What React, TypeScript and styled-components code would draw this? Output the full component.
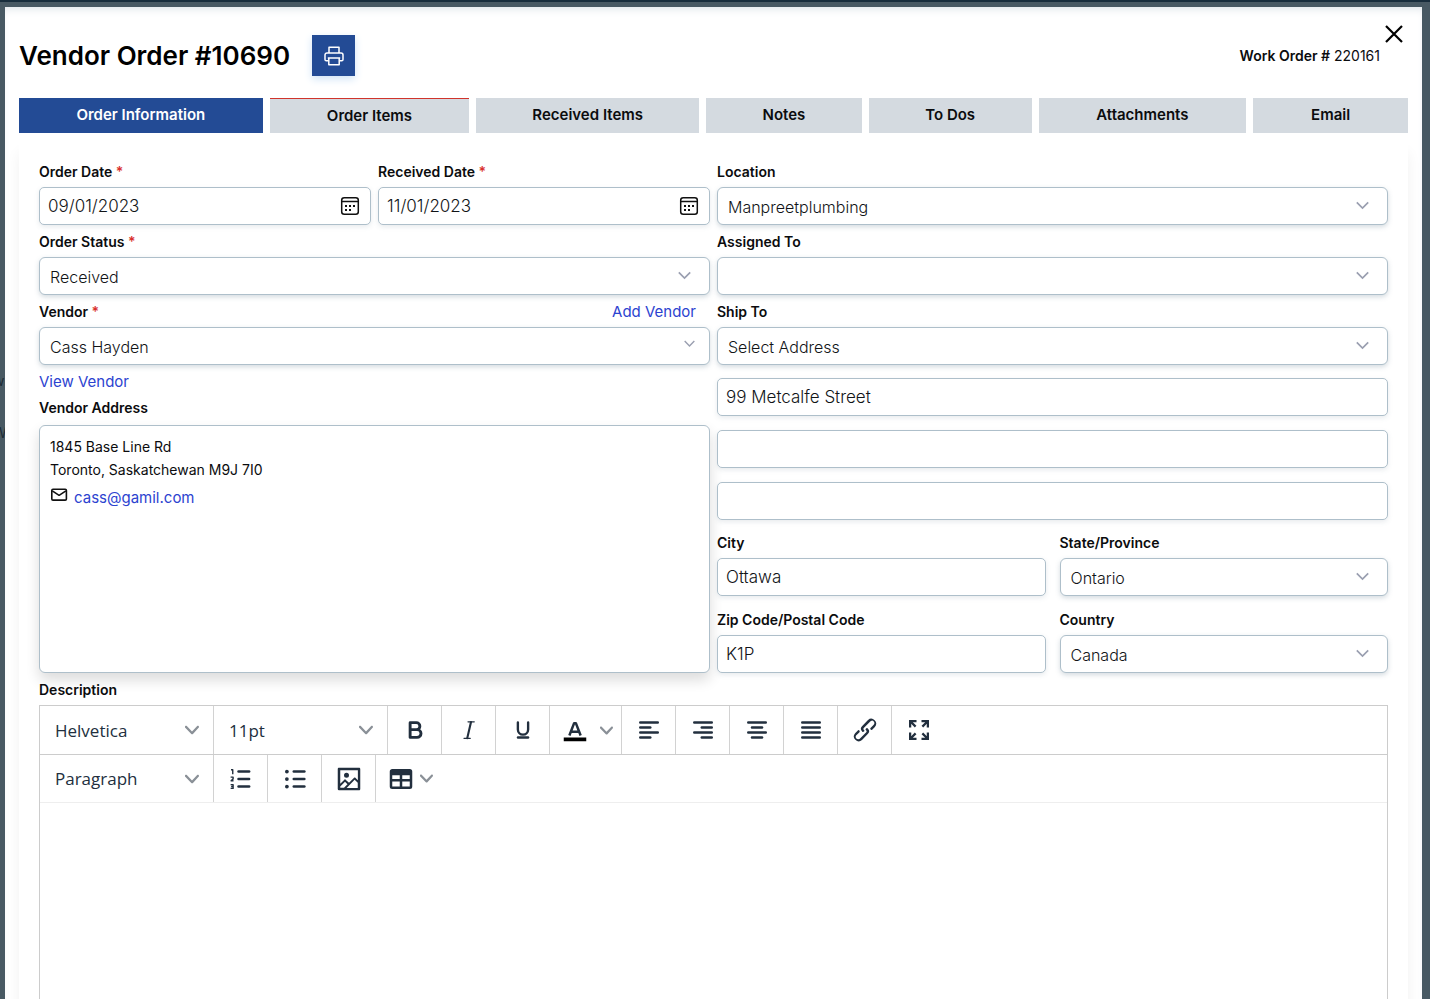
import React, { useId } from "react";
import styled, { createGlobalStyle } from "styled-components";

const SANS = `Inter, "Liberation Sans", sans-serif`;
const EDITOR_SANS = `"Open Sans", "Noto Sans", sans-serif`;

const GlobalStyle = createGlobalStyle`
  *, *::before, *::after { box-sizing: border-box; }
  html, body { margin: 0; padding: 0; }
  body { font-family: ${SANS}; font-size: 14px; color: #0b0c0e; background: #485963; overflow: hidden; }
  button, input, select { font-family: inherit; margin: 0; }
`;

/* ---------- page shell ---------- */

const Backdrop = styled.div`
  position: relative;
  height: 100vh;
  overflow: hidden;
  padding: 5px 8px 0 5px;
  background: #485963;
  border-top: 2px solid #182d3c;
`;

const Behind = styled.div`
  position: absolute;
  top: 353px;
  left: -7px;
  font-size: 14px;
  line-height: 52px;
  color: #1c2b35;
`;

const Modal = styled.main`
  position: relative;
  min-height: 100%;
  padding: 28px 14px 0;
  background: #fff;
  box-shadow: inset 0 6px 8px -4px #dfe5ea;
`;

const Header = styled.header`
  display: flex;
  align-items: center;
  gap: 22px;
`;

const Title = styled.h1`
  margin: 0;
  font-size: 26px;
  line-height: 40px;
  font-weight: 600;
  color: #000;
`;

const PrintButton = styled.button`
  display: grid;
  place-items: center;
  width: 43px;
  height: 41px;
  padding: 0;
  border: 0;
  color: #fff;
  background: #234b95;
  box-shadow: 0 3px 8px #cfe3f6;
`;

const WorkOrder = styled.p`
  margin: 0 28px 0 auto;
  font-size: 14px;
  line-height: 20px;
  b { font-weight: 600; }
`;

const CloseButton = styled.button`
  position: absolute;
  top: 17px;
  right: 18px;
  display: grid;
  place-items: center;
  width: 20px;
  height: 20px;
  padding: 0;
  border: 0;
  background: none;
  color: #000;
`;

const Tabs = styled.nav`
  display: flex;
  gap: 7px;
  margin-top: 22px;
`;

const Tab = styled.button<{ $share: number; $active?: boolean; $alert?: boolean }>`
  flex: ${(p) => p.$share} 1 0;
  min-width: 0;
  height: 35px;
  padding: 0 0 1px;
  border: 0;
  border-top: ${(p) => (p.$alert ? "1px solid #d0342c" : "0")};
  font-size: 15px;
  line-height: 20px;
  font-weight: 600;
  color: ${(p) => (p.$active ? "#fff" : "#0b0c0e")};
  background: ${(p) => (p.$active ? "#234b95" : "#d4dae0")};
`;

const Panel = styled.section`
  margin-top: 6px;
  padding: 23px 20px 20px;
  background: #fff;
  box-shadow: 0 14px 14px rgba(0, 0, 0, 0.06);
`;

/* ---------- form ---------- */

const Columns = styled.div`
  display: grid;
  grid-template-columns: 1fr 1fr;
  gap: 7px;
`;

const Column = styled.div`
  display: flex;
  flex-direction: column;
  gap: 7px;
  min-width: 0;
`;

const Pair = styled.div`
  display: grid;
  grid-template-columns: 1fr 1fr;
  gap: 7px;
`;

const AddressInputs = styled.div`
  display: flex;
  flex-direction: column;
  gap: 14px;
  margin-top: 6px;
`;

const AddressGrid = styled.div`
  display: grid;
  grid-template-columns: 1fr 1fr;
  gap: 14px;
  margin-top: 6px;
`;

const FieldBox = styled.div`
  display: flex;
  flex-direction: column;
  gap: 5px;
  min-width: 0;
`;

const LabelRow = styled.div`
  display: flex;
  justify-content: space-between;
  padding-right: 14px;
`;

const Label = styled.label`
  font-size: 14px;
  line-height: 20px;
  font-weight: 600;
`;

const Heading = styled.h2`
  margin: 0;
  font-size: 14px;
  line-height: 20px;
  font-weight: 600;
`;

const Required = styled.span`
  color: #d9302c;
`;

const Link = styled.a`
  align-self: flex-start;
  font-size: 15px;
  line-height: 19px;
  font-weight: 400;
  color: #2c43d0;
  text-decoration: none;
`;

const ControlWrap = styled.div`
  position: relative;
`;

const Input = styled.input`
  display: block;
  width: 100%;
  height: 38px;
  padding: 0 8px;
  border: 1px solid #aebfca;
  border-radius: 5px;
  outline: 0;
  font-size: 17px;
  font-weight: 300;
  line-height: 20px;
  color: #111417;
  background: #fff;
  box-shadow: 0 2px 5px rgba(90, 115, 135, 0.14);
`;

const Select = styled.select`
  appearance: none;
  display: block;
  width: 100%;
  height: 38px;
  padding: 1px 40px 0 10px;
  border: 1px solid #aebfca;
  border-radius: 6px;
  outline: 0;
  font-size: 16px;
  font-weight: 300;
  line-height: 20px;
  color: #111417;
  background: #fff;
  box-shadow: 0 2px 5px rgba(90, 115, 135, 0.26);
`;

const SelectArrow = styled.svg<{ $near?: boolean }>`
  position: absolute;
  top: ${(p) => (p.$near ? 13 : 14)}px;
  right: ${(p) => (p.$near ? 15 : 19)}px;
  width: ${(p) => (p.$near ? 11 : 13)}px;
  pointer-events: none;
`;

const DateButton = styled.button`
  position: absolute;
  top: 9px;
  right: 11px;
  display: block;
  width: 20px;
  height: 20px;
  padding: 0;
  border: 0;
  background: none;
`;

const AddressCard = styled.address`
  flex: 1;
  padding: 9px 10px;
  border: 1px solid #aebfca;
  border-radius: 6px;
  font-size: 14px;
  line-height: 23px;
  font-style: normal;
  font-weight: 400;
  background: #fff;
  box-shadow: 0 7px 14px rgba(0, 0, 0, 0.14);
`;

const MailRow = styled.div`
  display: flex;
  align-items: flex-start;
  gap: 6px;
  margin-top: 7px;
`;

/* ---------- editor ---------- */

const EditorBlock = styled.div`
  display: flex;
  flex-direction: column;
  gap: 5px;
  margin-top: 7px;
`;

const Editor = styled.div`
  border: 1px solid #ccc;
  background: #fff;
  color: #222f3e;
`;

const ToolRow = styled.div<{ $last?: boolean }>`
  display: flex;
  height: ${(p) => (p.$last ? 48 : 49)}px;
  border-bottom: 1px solid ${(p) => (p.$last ? "#eee" : "#ccc")};
`;

const ToolSelectWrap = styled.div`
  position: relative;
  width: 174px;
  border-right: 1px solid #d2d2d2;
`;

const ToolSelect = styled.select`
  appearance: none;
  width: 100%;
  height: 100%;
  padding: 0 40px 0 15px;
  border: 0;
  outline: 0;
  font-family: ${EDITOR_SANS};
  font-size: 17px;
  color: #222f3e;
  background: transparent;
`;

const ToolCaret = styled.svg`
  position: absolute;
  top: 17px;
  right: 14px;
  pointer-events: none;
`;

const Tool = styled.button<{ $open?: boolean }>`
  display: flex;
  align-items: center;
  justify-content: center;
  width: 54px;
  padding: 0;
  border: 0;
  border-right: ${(p) => (p.$open ? "0" : "1px solid #d2d2d2")};
  color: #222f3e;
  background: none;
`;

const SplitTool = styled(Tool)<{ $gap: number }>`
  justify-content: flex-start;
  gap: ${(p) => p.$gap}px;
  width: 72px;
  padding-left: 10px;
`;

const EditorBody = styled.div`
  height: 360px;
  padding: 16px;
  outline: 0;
  font-size: 15px;
`;

/* ---------- icons ---------- */

const CARET =
  "M8.7 2.2c.3-.3.8-.3 1 0 .4.4.4.9 0 1.2L5.7 7.8c-.3.3-.9.3-1.2 0L.2 3.4a.8.8 0 010-1.2c.3-.3.8-.3 1.1 0L5 6l3.7-3.8z";

function Caret() {
  return (
    <svg width="13" height="13" viewBox="0 0 10 10" aria-hidden="true">
      <path d={CARET} fill="#8a9097" />
    </svg>
  );
}

function Glyph({ children }: { children: React.ReactNode }) {
  return (
    <svg width="30" height="30" viewBox="0 0 24 24" fill="currentColor" aria-hidden="true">
      {children}
    </svg>
  );
}

function Bars({ rows }: { rows: [number, number][] }) {
  return (
    <Glyph>
      {rows.map(([x, w], i) => (
        <rect key={i} x={x} y={5 + i * 4} width={w} height="2" rx="1" />
      ))}
    </Glyph>
  );
}

const stroke = {
  fill: "none",
  stroke: "currentColor",
  strokeLinecap: "round" as const,
  strokeLinejoin: "round" as const,
};

const BoldIcon = (
  <Glyph>
    <path {...stroke} strokeWidth="2.3" d="M8.1 6.1h5a2.8 2.8 0 010 5.6h-5zM8.1 11.7h5.6a3.1 3.1 0 010 6.2H8.1z" />
  </Glyph>
);
const ItalicIcon = (
  <Glyph>
    <path {...stroke} strokeWidth="1.7" d="M13.6 5.6l-3 12.9" />
    <path {...stroke} strokeWidth="1" d="M11.2 5.4h5M8 18.6h5" />
  </Glyph>
);
const UnderlineIcon = (
  <Glyph>
    <path {...stroke} strokeWidth="1.9" d="M7.9 6v5.6a4.1 4.1 0 008.2 0V6" />
    <rect x="7" y="17" width="10" height="2" rx="1" />
  </Glyph>
);
const ColorIcon = (
  <Glyph>
    <rect x="3" y="18" width="18" height="3" fill="#000" />
    <path {...stroke} strokeLinecap="butt" strokeWidth="2" d="M7.500 16.400L11.300 6.500h1.400L16.500 16.400M9 13.300h6" />
  </Glyph>
);
const LinkIcon = (
  <Glyph>
    <path d="M6.2 12.3a1 1 0 011.4 1.4l-2.1 2a2 2 0 102.7 2.8l4.8-4.8a1 1 0 000-1.4 1 1 0 111.4-1.3 2.9 2.9 0 010 4L9.6 20a3.9 3.9 0 01-5.5-5.5l2-2zm11.6-.6a1 1 0 01-1.4-1.4l2-2a2 2 0 10-2.6-2.8L11 10.3a1 1 0 000 1.4A1 1 0 119.6 13a2.9 2.9 0 010-4L14.4 4a3.9 3.9 0 015.5 5.5l-2 2z" />
  </Glyph>
);
const FullscreenIcon = (
  <Glyph>
    {[0, 90, 180, 270].map((angle) => (
      <path
        key={angle}
        {...stroke}
        strokeLinecap="butt"
        strokeLinejoin="miter"
        strokeWidth="1.800"
        transform={`rotate(${angle} 12 12)`}
        d="M14 4.900h5.100V10M19 5l-4.300 4.300"
      />
    ))}
  </Glyph>
);
const BulletIcon = (
  <Glyph>
    {[6, 12, 18].map((y) => (
      <g key={y}>
        <circle cx="5.5" cy={y} r="1.5" />
        <rect x="10" y={y - 1} width="10.500" height="2" rx="1" />
      </g>
    ))}
  </Glyph>
);
const NumberIcon = (
  <Glyph>
    {[6, 12, 18].map((y) => (
      <rect key={y} x="9" y={y - 1} width="10.500" height="2" rx="1" />
    ))}
    <path {...stroke} strokeLinecap="butt" strokeWidth="1.100" d="M4 4.600h1.400v3.500M3.700 10.500h2v1.400l-1.600 1.500h1.900M3.700 16.500h2v3h-2M4.100 18h1.600" />
  </Glyph>
);
const ImageIcon = (
  <Glyph>
    <path
      fillRule="evenodd"
      d="M5 15.7l3.3-3.2c.3-.3.7-.3 1 0L12 15l4.100-4c.3-.4.8-.4 1 0l2 1.900V5H5v10.700zM5 18V19h3l2.800-2.900-2-2L5 17.900zm14-3l-2.500-2.400-6.400 6.500H19v-4zM4 3h16c.6 0 1 .4 1 1v16c0 .6-.4 1-1 1H4a1 1 0 01-1-1V4c0-.6.4-1 1-1zm6 8a2 2 0 100-4 2 2 0 000 4z"
    />
  </Glyph>
);
const TableIcon = (
  <Glyph>
    <path
      fillRule="evenodd"
      d="M19 4a2 2 0 012 2v12a2 2 0 01-2 2H5a2 2 0 01-2-2V6c0-1.100.9-2 2-2h14zM5 14v4h6v-4H5zm14 0h-6v4h6v-4zm0-5h-6v3h6V9zM5 12h6V9H5v3z"
    />
  </Glyph>
);

function PrinterIcon() {
  return (
    <svg width="20" height="20" viewBox="0 0 20 20" fill="none" stroke="currentColor" strokeWidth="1.500" strokeLinejoin="round" aria-hidden="true">
      <path d="M5 7V1.200h10V7" />
      <path d="M4.600 14.800H2.300c-.8 0-1.300-.5-1.300-1.300V9c0-1.100.8-2 2-2h14c1.200 0 2 .9 2 2v4.500c0 .8-.5 1.300-1.300 1.300h-2.300" />
      <path d="M3.800 12h12.400M4.800 12h10.400v6.800H4.800z" />
    </svg>
  );
}

const CALENDAR_DAYS = [
  [5, 9], [9, 9], [13, 9],
  [5, 13], [9, 13],
];

function CalendarIcon() {
  return (
    <svg width="20" height="20" viewBox="0 0 20 20" fill="none" stroke="#111" strokeWidth="1.500" aria-hidden="true">
      <rect x="1.700" y="1.700" width="16.600" height="16.600" rx="2.500" />
      <path d="M1.700 5.500h16.600" />
      {CALENDAR_DAYS.map(([x, y]) => (
        <rect key={`${x}-${y}`} x={x} y={y} width="2" height="2" fill="#111" stroke="none" />
      ))}
    </svg>
  );
}

function MailIcon() {
  return (
    <svg width="18" height="16" viewBox="0 0 18 16" fill="none" stroke="#111" strokeWidth="1.600" strokeLinejoin="round" aria-hidden="true">
      <rect x="1.800" y="1.300" width="14.600" height="10.800" rx="1.200" />
      <path d="M2.300 2.800L9.100 7.300l6.800-4.500" />
    </svg>
  );
}

/* ---------- field components ---------- */

type FieldProps = { label: string; required?: boolean; value: string };

function FieldLabel({ id, label, required }: { id: string; label: string; required?: boolean }) {
  return (
    <Label htmlFor={id}>
      {label}
      {required && <Required> *</Required>}
    </Label>
  );
}

function TextField({ label, value }: FieldProps) {
  const id = useId();
  return (
    <FieldBox>
      <FieldLabel id={id} label={label} />
      <Input id={id} defaultValue={value} />
    </FieldBox>
  );
}

function DateField({ label, required, value }: FieldProps) {
  const id = useId();
  return (
    <FieldBox>
      <FieldLabel id={id} label={label} required={required} />
      <ControlWrap>
        <Input id={id} defaultValue={value} />
        <DateButton type="button" aria-label={`Pick ${label}`}>
          <CalendarIcon />
        </DateButton>
      </ControlWrap>
    </FieldBox>
  );
}

function SelectField({ label, required, value, link, near }: FieldProps & { link?: string; near?: boolean }) {
  const id = useId();
  return (
    <FieldBox>
      <LabelRow>
        <FieldLabel id={id} label={label} required={required} />
        {link && <Link href="#add-vendor">{link}</Link>}
      </LabelRow>
      <ControlWrap>
        <Select id={id} defaultValue={value}>
          <option value={value}>{value}</option>
        </Select>
        <SelectArrow $near={near} viewBox="0 0 13 9" fill="none" stroke="#9a9fb0" strokeWidth="1.700" aria-hidden="true">
          <path d="M.8 1.300l5.700 5.700 5.700-5.700" />
        </SelectArrow>
      </ControlWrap>
    </FieldBox>
  );
}

function EditorSelect({ label, value }: { label: string; value: string }) {
  return (
    <ToolSelectWrap>
      <ToolSelect aria-label={label} defaultValue={value}>
        <option value={value}>{value}</option>
      </ToolSelect>
      <ToolCaret width="14" height="14" viewBox="0 0 10 10" aria-hidden="true">
        <path d={CARET} fill="#8a9097" />
      </ToolCaret>
    </ToolSelectWrap>
  );
}

const TABS = [
  { name: "Order Information", share: 244, active: true },
  { name: "Order Items", share: 200, alert: true },
  { name: "Received Items", share: 223 },
  { name: "Notes", share: 156 },
  { name: "To Dos", share: 163 },
  { name: "Attachments", share: 208 },
  { name: "Email", share: 155 },
];

export default function App() {
  return (
    <>
      <GlobalStyle />
      <Backdrop>
        <Behind aria-hidden="true">
          w<br />W
        </Behind>
        <Modal>
          <Header>
            <Title>Vendor Order #10690</Title>
            <PrintButton type="button" aria-label="Print">
              <PrinterIcon />
            </PrintButton>
            <WorkOrder>
              <b>Work Order #</b> 220161
            </WorkOrder>
            <CloseButton type="button" aria-label="Close">
              <svg width="20" height="20" viewBox="0 0 20 20" fill="none" stroke="currentColor" strokeWidth="2.200" aria-hidden="true">
                <path d="M2 2l16 16M18 2L2 18" />
              </svg>
            </CloseButton>
          </Header>

          <Tabs>
            {TABS.map((t) => (
              <Tab key={t.name} type="button" $share={t.share} $active={t.active} $alert={t.alert}>
                {t.name}
              </Tab>
            ))}
          </Tabs>

          <Panel>
            <Columns>
              <Column>
                <Pair>
                  <DateField label="Order Date" required value="09/01/2023" />
                  <DateField label="Received Date" required value="11/01/2023" />
                </Pair>
                <SelectField label="Order Status" required value="Received" />
                <SelectField label="Vendor" required value="Cass Hayden" link="Add Vendor" near />
                <Link href="#view-vendor">View Vendor</Link>
                <Heading>Vendor Address</Heading>
                <AddressCard>
                  1845 Base Line Rd
                  <br />
                  Toronto, Saskatchewan M9J 7I0
                  <MailRow>
                    <MailIcon />
                    <Link href="#mail">cass@gamil.com</Link>
                  </MailRow>
                </AddressCard>
              </Column>

              <Column>
                <SelectField label="Location" value="Manpreetplumbing" />
                <SelectField label="Assigned To" value="" />
                <SelectField label="Ship To" value="Select Address" />
                <AddressInputs>
                  <Input aria-label="Address line 1" defaultValue="99 Metcalfe Street" />
                  <Input aria-label="Address line 2" />
                  <Input aria-label="Address line 3" />
                </AddressInputs>
                <AddressGrid>
                  <TextField label="City" value="Ottawa" />
                  <SelectField label="State/Province" value="Ontario" />
                  <TextField label="Zip Code/Postal Code" value="K1P" />
                  <SelectField label="Country" value="Canada" />
                </AddressGrid>
              </Column>
            </Columns>

            <EditorBlock>
              <Heading id="description">Description</Heading>
              <Editor>
                <ToolRow>
                  <EditorSelect label="Font" value="Helvetica" />
                  <EditorSelect label="Font size" value="11pt" />
                  <Tool type="button" aria-label="Bold">{BoldIcon}</Tool>
                  <Tool type="button" aria-label="Italic">{ItalicIcon}</Tool>
                  <Tool type="button" aria-label="Underline">{UnderlineIcon}</Tool>
                  <SplitTool type="button" aria-label="Text color" $gap={10}>
                    {ColorIcon}
                    <Caret />
                  </SplitTool>
                  <Tool type="button" aria-label="Align left">
                    <Bars rows={[[4, 16], [4, 10], [4, 16], [4, 10]]} />
                  </Tool>
                  <Tool type="button" aria-label="Align right">
                    <Bars rows={[[4, 16], [10, 10], [4, 16], [10, 10]]} />
                  </Tool>
                  <Tool type="button" aria-label="Align center">
                    <Bars rows={[[4, 16], [7, 10], [4, 16], [7, 10]]} />
                  </Tool>
                  <Tool type="button" aria-label="Justify">
                    <Bars rows={[[4, 16], [4, 16], [4, 16], [4, 16]]} />
                  </Tool>
                  <Tool type="button" aria-label="Insert link">{LinkIcon}</Tool>
                  <Tool type="button" aria-label="Fullscreen" $open>{FullscreenIcon}</Tool>
                </ToolRow>
                <ToolRow $last>
                  <EditorSelect label="Block format" value="Paragraph" />
                  <Tool type="button" aria-label="Numbered list">{NumberIcon}</Tool>
                  <Tool type="button" aria-label="Bullet list">{BulletIcon}</Tool>
                  <Tool type="button" aria-label="Insert image">{ImageIcon}</Tool>
                  <SplitTool type="button" aria-label="Table" $gap={4} $open>
                    {TableIcon}
                    <Caret />
                  </SplitTool>
                </ToolRow>
                <EditorBody contentEditable suppressContentEditableWarning role="textbox" aria-labelledby="description" />
              </Editor>
            </EditorBlock>
          </Panel>
        </Modal>
      </Backdrop>
    </>
  );
}
